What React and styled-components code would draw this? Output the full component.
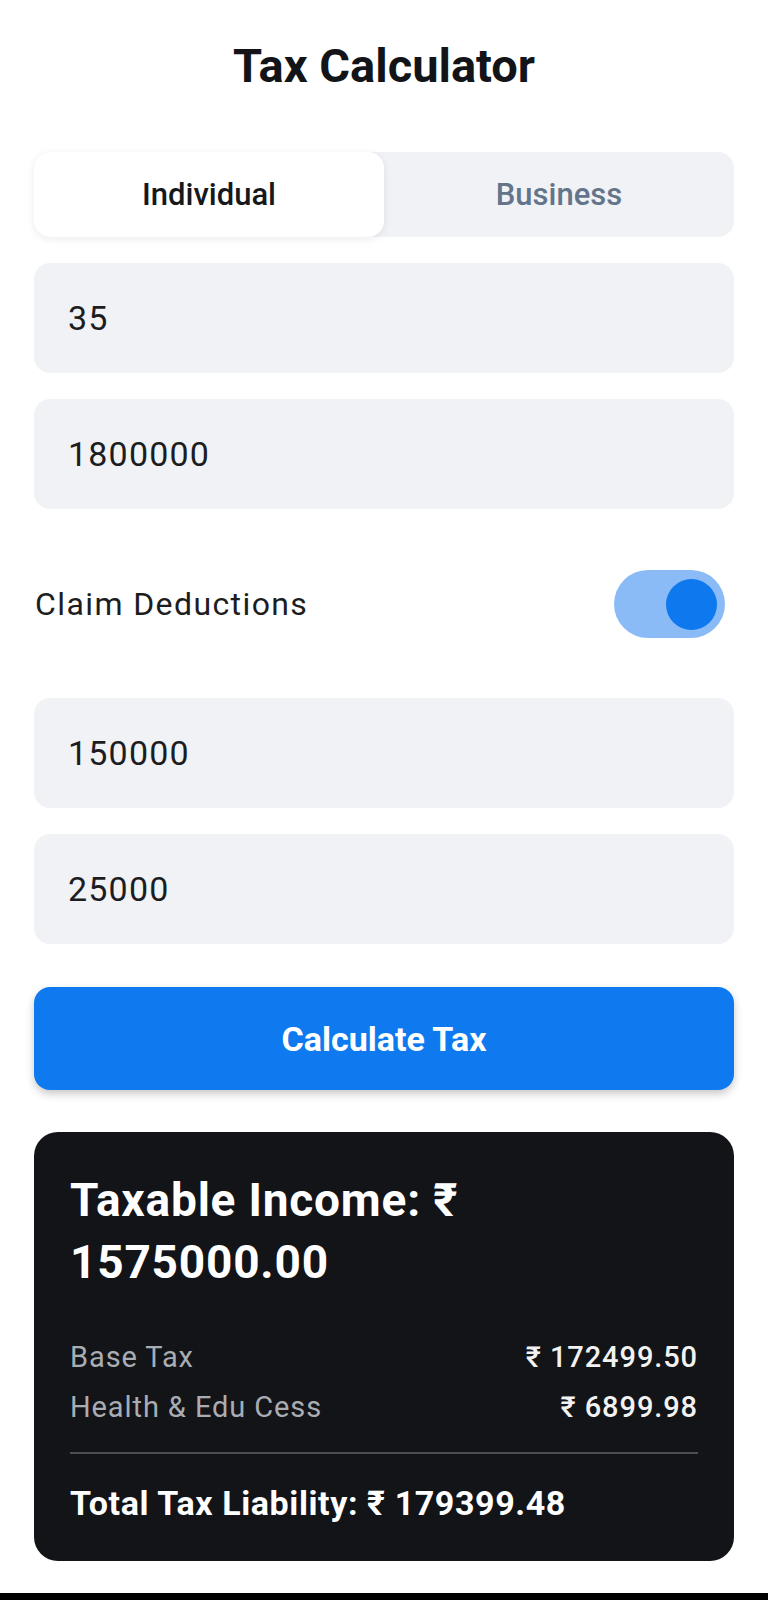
import React, { useState } from 'react'
import styled, { createGlobalStyle } from 'styled-components'

const GlobalStyle = createGlobalStyle`
  html, body {
    margin: 0;
    padding: 0;
    background: #FFFFFF;
    font-family: Roboto, "Noto Sans", "DejaVu Sans", sans-serif;
  }
  * {
    box-sizing: border-box;
  }
`

const Page = styled.div`
  width: 768px;
  min-height: 1600px;
  display: flex;
  flex-direction: column;
`

const Content = styled.div`
  padding: 38px 34px 0 34px;
  display: flex;
  flex-direction: column;
  gap: 26px;
`

const Title = styled.h1`
  margin: 0 0 32px 0;
  font-size: 47px;
  line-height: 56px;
  font-weight: 700;
  text-align: center;
  color: #121418;
`

const Segmented = styled.div`
  height: 85px;
  display: grid;
  grid-template-columns: 1fr 1fr;
  background-color: #F0F2F5;
  border-radius: 16px;
`

const Segment = styled.button`
  border: none;
  border-radius: 16px;
  font-family: inherit;
  font-size: 31px;
  font-weight: 500;
  cursor: pointer;
  background-color: ${p => (p.$active ? '#FFFFFF' : 'transparent')};
  color: ${p => (p.$active ? '#16181C' : '#64748B')};
  box-shadow: ${p => (p.$active ? '0 2px 8px rgba(0, 0, 0, 0.08)' : 'none')};
`

const Field = styled.input`
  height: 110px;
  width: 100%;
  border: none;
  outline: none;
  border-radius: 16px;
  padding: 0 34px;
  background-color: #F0F2F5;
  font-family: inherit;
  font-size: 34px;
  letter-spacing: 1.2px;
  color: #1C1D21;
`

const ToggleRow = styled.div`
  height: 68px;
  margin: 35px 9px 34px 1px;
  display: flex;
  align-items: center;
  justify-content: space-between;
`

const ToggleLabel = styled.span`
  font-size: 32px;
  letter-spacing: 1.4px;
  color: #1C1D21;
`

const Track = styled.button`
  width: 111px;
  height: 68px;
  border: none;
  border-radius: 34px;
  padding: 0 8px;
  display: flex;
  align-items: center;
  justify-content: ${p => (p.$on ? 'flex-end' : 'flex-start')};
  background-color: ${p => (p.$on ? '#8ABBF6' : '#D0D4DA')};
  cursor: pointer;
`

const Thumb = styled.span`
  width: 51px;
  height: 51px;
  border-radius: 50%;
  background-color: ${p => (p.$on ? '#0E78EF' : '#FFFFFF')};
`

const CalcButton = styled.button`
  margin-top: 17px;
  height: 103px;
  border: none;
  border-radius: 16px;
  background-color: #0F7AEF;
  color: #FFFFFF;
  font-family: inherit;
  font-size: 34px;
  font-weight: 700;
  box-shadow: 0 4px 8px rgba(0, 0, 0, 0.22);
  cursor: pointer;
`

const ResultCard = styled.div`
  margin-top: 16px;
  padding: 37px 36px 37px 36px;
  border-radius: 24px;
  background-color: #121418;
  color: #FFFFFF;
`

const Taxable = styled.div`
  font-size: 46px;
  line-height: 62px;
  font-weight: 700;
  letter-spacing: 0.8px;
`

const Breakdown = styled.div`
  margin-top: 39px;
`

const Row = styled.div`
  display: flex;
  justify-content: space-between;
  font-size: 29px;
  line-height: 50px;
  letter-spacing: 0.9px;
`

const RowLabel = styled.span`
  color: #A9ADB3;
`

const RowValue = styled.span`
  color: #F2F2F2;
  font-weight: 500;
`

const Divider = styled.div`
  margin-top: 20px;
  height: 2px;
  background-color: #4B4F55;
`

const Total = styled.div`
  margin-top: 29px;
  font-size: 34px;
  line-height: 41px;
  font-weight: 700;
  letter-spacing: 0.6px;
`

const NavBar = styled.div`
  margin-top: auto;
  height: 7px;
  background-color: #000000;
`

const breakdown = [
  { label: 'Base Tax', value: '₹ 172499.50' },
  { label: 'Health & Edu Cess', value: '₹ 6899.98' }
]

const App = () => {
  const [mode, setMode] = useState('Individual')
  const [deductions, setDeductions] = useState(true)

  return (
    <>
      <GlobalStyle />
      <Page>
        <Content>
          <Title>Tax Calculator</Title>
          <Segmented>
            {['Individual', 'Business'].map(item => (
              <Segment key={item} $active={mode === item} onClick={() => setMode(item)}>
                {item}
              </Segment>
            ))}
          </Segmented>
          <Field defaultValue="35" />
          <Field defaultValue="1800000" />
          <ToggleRow>
            <ToggleLabel>Claim Deductions</ToggleLabel>
            <Track $on={deductions} onClick={() => setDeductions(!deductions)}>
              <Thumb $on={deductions} />
            </Track>
          </ToggleRow>
          <Field defaultValue="150000" />
          <Field defaultValue="25000" />
          <CalcButton>Calculate Tax</CalcButton>
          <ResultCard>
            <Taxable>Taxable Income: ₹ 1575000.00</Taxable>
            <Breakdown>
              {breakdown.map(item => (
                <Row key={item.label}>
                  <RowLabel>{item.label}</RowLabel>
                  <RowValue>{item.value}</RowValue>
                </Row>
              ))}
            </Breakdown>
            <Divider />
            <Total>Total Tax Liability: ₹ 179399.48</Total>
          </ResultCard>
        </Content>
        <NavBar />
      </Page>
    </>
  )
}

export default App
